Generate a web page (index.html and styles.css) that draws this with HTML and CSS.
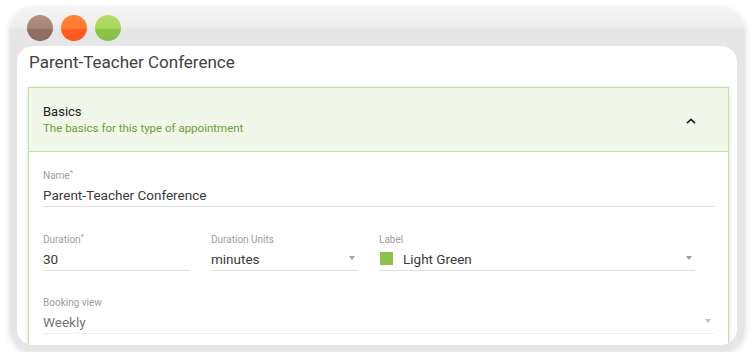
FILE: index.html
```html
<!DOCTYPE html>
<html lang="en">
<head>
    <meta charset="UTF-8">
    <meta name="viewport" content="width=device-width, initial-scale=1.0">
    <title>Parent-Teacher Conference</title>
    <link rel="stylesheet" href="styles.css">
</head>
<body>
    <div class="frame">
        <div class="dots">
            <span class="dot brown"></span>
            <span class="dot orange"></span>
            <span class="dot green"></span>
        </div>
        <div class="panel">
            <h1 class="title">Parent-Teacher Conference</h1>
            <div class="card">
                <div class="card-header">
                    <div>
                        <div class="card-title">Basics</div>
                        <div class="card-sub">The basics for this type of appointment</div>
                    </div>
                    <svg class="chevron" width="10" height="6" viewBox="0 0 10 6">
                        <path d="M1 5.2 L5 1.4 L9 5.2" fill="none" stroke="#212121" stroke-width="1.8"/>
                    </svg>
                </div>
                <div class="card-body">
                    <div class="field">
                        <label class="field-label">Name<sup>*</sup></label>
                        <div class="field-value">Parent-Teacher Conference</div>
                    </div>
                    <div class="row">
                        <div class="field">
                            <label class="field-label">Duration<sup>*</sup></label>
                            <div class="field-value">30</div>
                        </div>
                        <div class="field select">
                            <label class="field-label">Duration Units</label>
                            <div class="field-value">minutes</div>
                        </div>
                        <div class="field select">
                            <label class="field-label">Label</label>
                            <div class="field-value"><span class="swatch"></span>Light Green</div>
                        </div>
                    </div>
                    <div class="field select muted">
                        <label class="field-label">Booking view</label>
                        <div class="field-value">Weekly</div>
                    </div>
                </div>
            </div>
        </div>
    </div>
</body>
</html>
```

FILE: styles.css
```css
body {
    margin: 0;
    background: #fff;
    font-family: Roboto, "Liberation Sans", Arial, sans-serif;
}
.frame {
    margin: 7px 10px 0;
    height: 345px;
    box-sizing: border-box;
    padding: 0 8px 7px 7px;
    border-radius: 24px;
    background: linear-gradient(to bottom, #f4f4f4 0, #eeeeee 19px, #e6e6e6 22px, #e6e6e6 100%);
    box-shadow: 0 2px 7px rgba(0, 0, 0, 0.14);
}
.dots {
    height: 39px;
    display: flex;
    align-items: center;
    gap: 8px;
    padding: 3px 0 0 10px;
    box-sizing: border-box;
}
.dot {
    width: 26px;
    height: 26px;
    border-radius: 50%;
}
.dot.brown {
    background: linear-gradient(to bottom, #b39082 0, #a58476 52%, #8f7064 56%, #8a6c60 100%);
}
.dot.orange {
    background: linear-gradient(to bottom, #ff8536 0, #ff7a30 52%, #ff5e22 56%, #ff5722 100%);
}
.dot.green {
    background: linear-gradient(to bottom, #b5dc6a 0, #a8d55a 52%, #8cc44a 56%, #88c047 100%);
}
.panel {
    height: 299px;
    background: #fff;
    border-radius: 16px;
    overflow: hidden;
    padding: 0 8px 0 11px;
}
.title {
    margin: 0 0 9px 1px;
    font-size: 17px;
    font-weight: 400;
    line-height: 32px;
    color: #424242;
}
.card {
    border: 1px solid #c5e1a5;
    box-shadow: 0 1px 5px rgba(0, 0, 0, 0.13);
}
.card-header {
    display: flex;
    align-items: center;
    justify-content: space-between;
    padding: 16px 32px 15px 14px;
    background: #f1f8e9;
    border-bottom: 1px solid #c5e1a5;
}
.card-title {
    font-size: 13px;
    line-height: 16px;
    color: #212121;
}
.card-sub {
    font-size: 11.5px;
    line-height: 16px;
    color: #689f38;
}
.chevron {
    margin-top: 2px;
}
.card-body {
    display: flex;
    flex-direction: column;
    gap: 25.5px;
    padding: 17px 14px 20px;
}
.row {
    display: grid;
    grid-template-columns: 147px 147px 316px;
    column-gap: 21px;
}
.field {
    position: relative;
    border-bottom: 1px solid #e0e0e0;
}
.field-label {
    display: block;
    font-size: 10px;
    line-height: 14px;
    color: #9e9e9e;
    margin-bottom: 1px;
}
.field-label sup {
    font-size: 8px;
    line-height: 0;
}
.field-value {
    display: flex;
    align-items: center;
    font-size: 13.5px;
    line-height: 22px;
    color: #3a3a3a;
}
.select::after {
    content: "";
    position: absolute;
    right: 3px;
    bottom: 10px;
    border-left: 3.5px solid transparent;
    border-right: 3.5px solid transparent;
    border-top: 4px solid #9e9e9e;
}
.muted {
    border-bottom-color: #eeeeee;
}
.muted .field-value {
    color: #757575;
}
.muted::after {
    border-top-color: #bdbdbd;
}
.swatch {
    width: 13px;
    height: 13px;
    background: #8bc34a;
    margin: 0 10px 0 1px;
}
```
